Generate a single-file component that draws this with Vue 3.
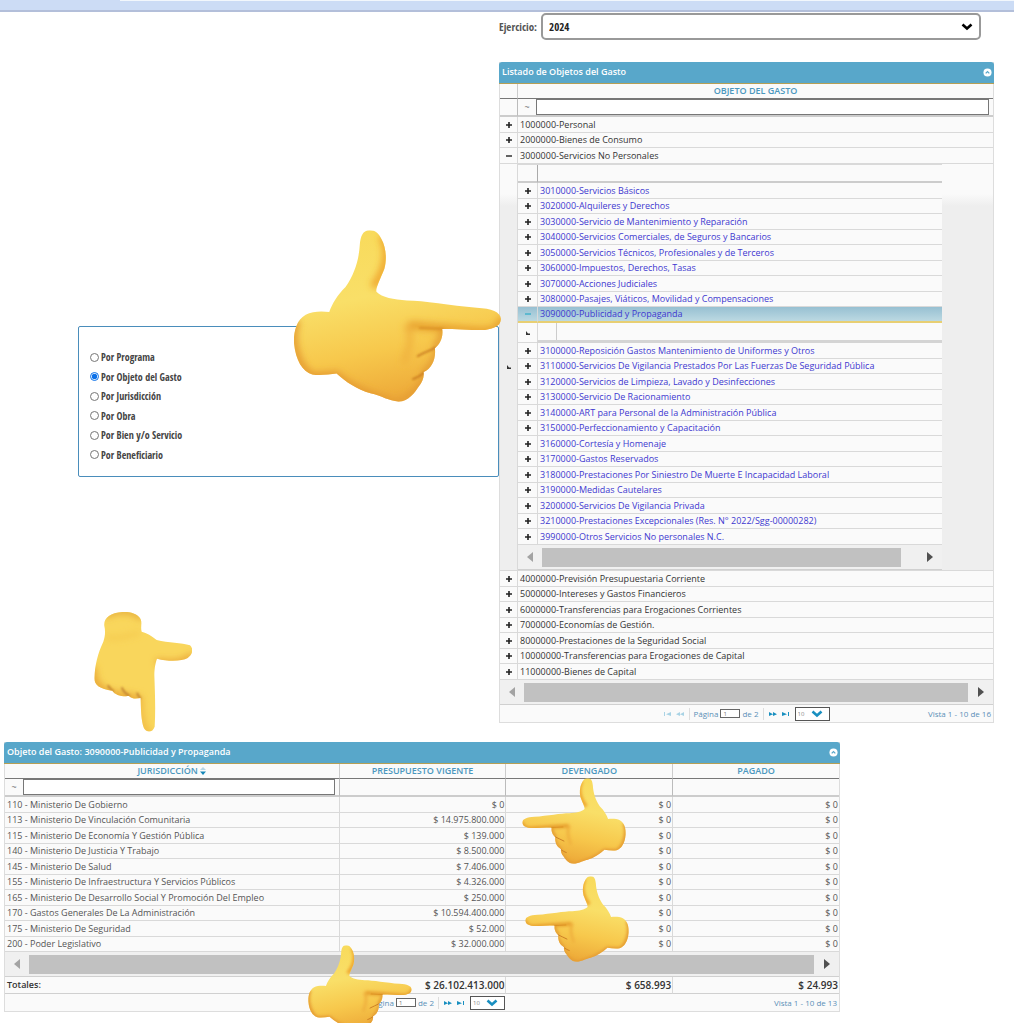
<script setup>
import { ref } from 'vue'

const year = ref('2024')
const grouping = ref('Por Objeto del Gasto')
const groupings = [
  'Por Programa',
  'Por Objeto del Gasto',
  'Por Jurisdicción',
  'Por Obra',
  'Por Bien y/o Servicio',
  'Por Beneficiario',
]

const rowsBefore = ['1000000-Personal', '2000000-Bienes de Consumo', '3000000-Servicios No Personales']
const rowsAfter = [
  '4000000-Previsión Presupuestaria Corriente',
  '5000000-Intereses y Gastos Financieros',
  '6000000-Transferencias para Erogaciones Corrientes',
  '7000000-Economías de Gestión.',
  '8000000-Prestaciones de la Seguridad Social',
  '10000000-Transferencias para Erogaciones de Capital',
  '11000000-Bienes de Capital',
]
const selected = '3090000-Publicidad y Propaganda'
const subBefore = [
  '3010000-Servicios Básicos',
  '3020000-Alquileres y Derechos',
  '3030000-Servicio de Mantenimiento y Reparación',
  '3040000-Servicios Comerciales, de Seguros y Bancarios',
  '3050000-Servicios Técnicos, Profesionales y de Terceros',
  '3060000-Impuestos, Derechos, Tasas',
  '3070000-Acciones Judiciales',
  '3080000-Pasajes, Viáticos, Movilidad y Compensaciones',
  selected,
]
const subAfter = [
  '3100000-Reposición Gastos Mantenimiento de Uniformes y Otros',
  '3110000-Servicios De Vigilancia Prestados Por Las Fuerzas De Seguridad Pública',
  '3120000-Servicios de Limpieza, Lavado y Desinfecciones',
  '3130000-Servicio De Racionamiento',
  '3140000-ART para Personal de la Administración Pública',
  '3150000-Perfeccionamiento y Capacitación',
  '3160000-Cortesía y Homenaje',
  '3170000-Gastos Reservados',
  '3180000-Prestaciones Por Siniestro De Muerte E Incapacidad Laboral',
  '3190000-Medidas Cautelares',
  '3200000-Servicios De Vigilancia Privada',
  '3210000-Prestaciones Excepcionales (Res. N° 2022/Sgg-00000282)',
  '3990000-Otros Servicios No personales N.C.',
]

const budget = [
  ['110 - Ministerio De Gobierno', '$ 0'],
  ['113 - Ministerio De Vinculación Comunitaria', '$ 14.975.800.000'],
  ['115 - Ministerio De Economía Y Gestión Pública', '$ 139.000'],
  ['140 - Ministerio De Justicia Y Trabajo', '$ 8.500.000'],
  ['145 - Ministerio De Salud', '$ 7.406.000'],
  ['155 - Ministerio De Infraestructura Y Servicios Públicos', '$ 4.326.000'],
  ['165 - Ministerio De Desarrollo Social Y Promoción Del Empleo', '$ 250.000'],
  ['170 - Gastos Generales De La Administración', '$ 10.594.400.000'],
  ['175 - Ministerio De Seguridad', '$ 52.000'],
  ['200 - Poder Legislativo', '$ 32.000.000'],
]
</script>

<template>
  <div class="page">
    <svg class="defs" aria-hidden="true">
      <defs>
        <linearGradient id="skin" x1="0" y1="0" x2="0.25" y2="1">
          <stop offset="0" stop-color="#f8d958" />
          <stop offset="0.45" stop-color="#f9df68" />
          <stop offset="0.75" stop-color="#f7c84c" />
          <stop offset="1" stop-color="#eeac3a" />
        </linearGradient>
        <filter id="soft" x="-30%" y="-30%" width="160%" height="160%"><feGaussianBlur stdDeviation="11" /></filter>
        <filter id="fine" x="-30%" y="-30%" width="160%" height="160%"><feGaussianBlur stdDeviation="3" /></filter>
        <clipPath id="outline">
          <path d="M268 29C245 29 240 50 238 72C235 120 222 160 195 200C170 225 155 250 146 275C125 272 95 272 75 283C45 300 38 340 40 370C45 420 65 455 95 463C120 467 145 462 168 460C195 485 230 508 270 520C305 528 325 543 355 545C385 545 405 515 415 500C428 485 432 470 430 456C455 445 468 415 464 384C480 372 490 350 486 326C530 326 580 330 615 329C645 325 662 315 663 296C662 275 635 264 590 262C510 255 430 240 380 240C340 237 305 232 288 214C285 205 300 175 312 145C320 115 317 80 303 55C295 38 285 29 268 29Z" />
        </clipPath>
        <clipPath id="outline-down">
          <path d="M112 36C75 38 55 55 58 78C62 95 60 110 55 125C38 160 30 195 28 235C28 255 45 268 82 272C90 285 110 290 132 288C142 298 155 296 167 294C168 330 168 360 177 385C187 400 203 397 209 380C212 330 210 280 208 225C208 205 212 185 216 176C250 185 290 184 308 174C325 162 325 145 315 136C290 127 250 130 215 120C200 108 185 98 170 95C166 80 172 70 167 58C160 42 135 34 112 36Z" />
        </clipPath>
        <symbol id="hand" viewBox="38 28 627 518">
          <g clip-path="url(#outline)">
            <rect x="30" y="20" width="645" height="535" fill="url(#skin)" />
            <g fill="none" filter="url(#soft)">
              <path d="M305 45C330 90 320 150 278 200" stroke="#efa62f" stroke-width="24" />
              <path d="M48 300C25 350 45 440 95 470L168 466C200 498 270 530 355 552" stroke="#e59b32" stroke-width="24" />
              <path d="M385 315C440 318 560 333 625 333Q665 325 668 290" stroke="#e8a12f" stroke-width="24" />
              <path d="M375 315C405 345 380 400 370 430" stroke="#efb03d" stroke-width="16" />
              <path d="M350 545C400 540 435 480 435 455C465 430 475 390 468 375Q490 350 488 326" stroke="#e39a33" stroke-width="18" />
            </g>
            <g fill="none" filter="url(#fine)" stroke-linecap="round">
              <path d="M418 323L488 326" stroke="#d88c20" stroke-width="5" />
              <path d="M412 408C430 398 448 392 466 382" stroke="#c4741f" stroke-width="5" />
              <path d="M398 477C410 473 422 466 434 456" stroke="#c4741f" stroke-width="5" />
            </g>
          </g>
        </symbol>
        <symbol id="collapse" viewBox="0 0 10 10">
          <circle cx="5" cy="5" r="4.5" fill="#fff" />
          <path d="M3 6L5 4L7 6" fill="none" stroke="#58a7ca" stroke-width="1.4" />
        </symbol>
        <symbol id="chevron" viewBox="0 0 12 8"><path d="M1.5 1.5L6 5.5L10.500 1.500" fill="none" stroke="currentColor" stroke-width="2.600" /></symbol>
        <symbol id="plus" viewBox="0 0 8 8"><path d="M1 4H7M4 1V7" stroke="#222" stroke-width="1.6" /></symbol>
        <symbol id="minus" viewBox="0 0 8 8"><path d="M1 4H7" stroke="currentColor" stroke-width="1.4" /></symbol>
        <symbol id="branch" viewBox="0 0 6 6"><path d="M1 1V5H5V3.500H3Z" fill="#333" /></symbol>
        <symbol id="left" viewBox="0 0 6 10"><path d="M6 0V10L0 5Z" fill="#a3a3a3" /></symbol>
        <symbol id="right" viewBox="0 0 6 10"><path d="M0 0V10L6 5Z" fill="#505050" /></symbol>
        <symbol id="next" viewBox="0 0 8 6"><path d="M0 1L4 3.200L0 5ZM4 1L8 3.200L4 5Z" fill="currentColor" /></symbol>
        <symbol id="last" viewBox="0 0 8 6"><path d="M0 1L5 3.200L0 5ZM6 1H7V5H6Z" fill="currentColor" /></symbol>
      </defs>
    </svg>

    <div class="topbar"><span></span></div>

    <main class="upper">
      <fieldset class="choices">
        <label v-for="g in groupings" :key="g">
          <input v-model="grouping" type="radio" name="grouping" :value="g" />{{ g }}
        </label>
      </fieldset>

      <div class="right">
        <div class="year">
          <label for="year">Ejercicio:</label>
          <div class="pick">
            <select id="year" v-model="year"><option>2024</option></select>
            <svg><use href="#chevron" /></svg>
          </div>
        </div>

        <section class="panel objects">
          <header>
            <h2>Listado de Objetos del Gasto</h2>
            <button type="button" aria-label="Contraer"><svg><use href="#collapse" /></svg></button>
          </header>
          <table>
            <colgroup><col class="tree" /><col /></colgroup>
            <thead>
              <tr class="heads"><th></th><th>OBJETO DEL GASTO</th></tr>
              <tr class="filters">
                <td></td>
                <td><div class="filter"><span>~</span><input type="text" aria-label="Filtrar objeto" /></div></td>
              </tr>
            </thead>
            <tbody class="rows">
              <tr v-for="(r, i) in rowsBefore" :key="r">
                <td class="icon"><svg><use :href="i === 2 ? '#minus' : '#plus'" /></svg></td>
                <td>{{ r }}</td>
              </tr>
              <tr class="nest">
                <td class="icon"><svg class="branch"><use href="#branch" /></svg></td>
                <td>
                  <div class="sub">
                    <table>
                      <colgroup><col class="tree" /><col /></colgroup>
                      <thead><tr class="blank"><td></td><td></td></tr></thead>
                      <tbody class="rows">
                        <tr v-for="r in subBefore" :key="r" :class="{ selected: r === selected }">
                          <td class="icon"><svg><use :href="r === selected ? '#minus' : '#plus'" /></svg></td>
                          <td>{{ r }}</td>
                        </tr>
                        <tr class="empty">
                          <td class="icon"><svg class="branch"><use href="#branch" /></svg></td>
                          <td><span></span></td>
                        </tr>
                        <tr v-for="r in subAfter" :key="r">
                          <td class="icon"><svg><use href="#plus" /></svg></td>
                          <td>{{ r }}</td>
                        </tr>
                      </tbody>
                    </table>
                    <div class="scroll short"><svg><use href="#left" /></svg><i></i><svg><use href="#right" /></svg></div>
                  </div>
                </td>
              </tr>
              <tr v-for="r in rowsAfter" :key="r">
                <td class="icon"><svg><use href="#plus" /></svg></td>
                <td>{{ r }}</td>
              </tr>
            </tbody>
          </table>
          <div class="scroll"><svg><use href="#left" /></svg><i></i><svg><use href="#right" /></svg></div>
          <footer>
            <div class="pager">
              <button type="button" disabled aria-label="Primera"><svg class="flip"><use href="#last" /></svg></button>
              <button type="button" disabled aria-label="Anterior"><svg class="flip"><use href="#next" /></svg></button>
              <label>Página <input type="text" value="1" /></label><span class="of">de 2</span>
              <button type="button" aria-label="Siguiente"><svg><use href="#next" /></svg></button>
              <button type="button" aria-label="Última"><svg><use href="#last" /></svg></button>
              <div class="size"><select aria-label="Filas por página"><option>10</option></select><svg><use href="#chevron" /></svg></div>
            </div>
            <p>Vista 1 - 10 de 16</p>
          </footer>
        </section>
      </div>
    </main>

    <section class="panel budget">
      <header>
        <h2>Objeto del Gasto: 3090000-Publicidad y Propaganda</h2>
        <button type="button" aria-label="Contraer"><svg><use href="#collapse" /></svg></button>
      </header>
      <table>
        <colgroup><col class="name" /><col /><col /><col /></colgroup>
        <thead>
          <tr class="heads">
            <th>JURISDICCIÓN <svg class="sort" viewBox="0 0 6 8"><path d="M0 3L3 0L6 3Z" fill="#b5d6e6" /><path d="M0 4.500H6L3 8Z" fill="#1687b8" /></svg></th>
            <th>PRESUPUESTO VIGENTE</th><th>DEVENGADO</th><th>PAGADO</th>
          </tr>
          <tr class="filters">
            <td><div class="filter"><span>~</span><input type="text" aria-label="Filtrar jurisdicción" /></div></td>
            <td></td><td></td><td></td>
          </tr>
        </thead>
        <tbody class="rows">
          <tr v-for="[name, amount] in budget" :key="name">
            <td>{{ name }}</td><td>{{ amount }}</td><td>$ 0</td><td>$ 0</td>
          </tr>
        </tbody>
        <tbody>
          <tr>
            <td colspan="4"><div class="scroll"><svg><use href="#left" /></svg><i></i><svg><use href="#right" /></svg></div></td>
          </tr>
        </tbody>
        <tfoot>
          <tr><td>Totales:</td><td>$ 26.102.413.000</td><td>$ 658.993</td><td>$ 24.993</td></tr>
        </tfoot>
      </table>
      <footer>
        <div class="pager">
          <button type="button" disabled aria-label="Primera"><svg class="flip"><use href="#last" /></svg></button>
          <button type="button" disabled aria-label="Anterior"><svg class="flip"><use href="#next" /></svg></button>
          <label>Página <input type="text" value="1" /></label><span class="of">de 2</span>
          <button type="button" aria-label="Siguiente"><svg><use href="#next" /></svg></button>
          <button type="button" aria-label="Última"><svg><use href="#last" /></svg></button>
          <div class="size"><select aria-label="Filas por página"><option>10</option></select><svg><use href="#chevron" /></svg></div>
        </div>
        <p>Vista 1 - 10 de 13</p>
      </footer>
      <svg class="hand devengado"><use href="#hand" /></svg>
      <svg class="hand legislativo"><use href="#hand" /></svg>
      <svg class="hand total"><use href="#hand" /></svg>
    </section>

    <svg class="hand big"><use href="#hand" /></svg>
    <svg class="hand down" viewBox="27 36 294 360">
      <g clip-path="url(#outline-down)">
        <rect x="20" y="30" width="310" height="370" fill="#f9d65c" />
        <g fill="none" filter="url(#soft)">
          <path d="M60 48C90 25 150 28 172 55" stroke="#e5ae3c" stroke-width="20" />
          <path d="M22 200C15 260 60 280 90 285L165 300" stroke="#e9a838" stroke-width="26" />
          <path d="M214 184C250 194 300 192 322 165" stroke="#e8a235" stroke-width="18" />
          <path d="M165 290C165 330 170 400 200 402" stroke="#efb23e" stroke-width="14" />
          <path d="M62 110C80 122 125 110 165 98" stroke="#f2c246" stroke-width="8" />
        </g>
        <g fill="none" filter="url(#fine)" stroke="#b9782a" stroke-width="5">
          <path d="M68 256Q76 268 86 275" />
          <path d="M110 262Q118 280 134 288" />
          <path d="M156 278Q160 290 168 296" />
        </g>
      </g>
    </svg>
  </div>
</template>

<style>
body { margin: 0; background: #fff; }
</style>

<style scoped>
* { box-sizing: border-box; }
.page {
  position: relative;
  min-height: 100vh;
  overflow: hidden;
  font-family: "Open Sans", "Noto Sans", sans-serif;
  font-size: 9px;
  line-height: 12px;
  color: #333;
}
.defs { position: absolute; width: 0; height: 0; }
svg { display: block; }
button { padding: 0; border: 0; background: none; cursor: pointer; }
.topbar { height: 12px; background: #ccdcf5; border-bottom: 2px solid #b3bfda; }
.topbar span { display: block; height: 1px; margin-left: 120px; background: #f2f7fc; }

.upper {
  display: grid;
  grid-template-columns: minmax(0, 421fr) minmax(0, 495fr);
  align-items: start;
  padding: 1px 20px 0 78px;
}
.choices {
  min-width: 0;
  height: 151px;
  margin: 313px 0 0;
  padding: 20px 11px 0;
  border: 1px solid #4a8dbb;
  border-radius: 2px;
}
.choices label {
  display: flex;
  align-items: center;
  gap: 2px;
  height: 20px;
  font: 700 10px/16px "Open Sans Condensed", "Roboto Condensed", "Noto Sans Condensed", Roboto, sans-serif;
  color: #444;
}
.choices label:nth-child(even) { height: 19px; }
.choices input { width: 9px; height: 9px; margin: 0; accent-color: #0b70e8; }

.year {
  display: flex;
  align-items: center;
  gap: 4px;
  height: 27px;
  margin-bottom: 22px;
  font: 700 11px/16px "Open Sans Condensed", "Roboto Condensed", "Noto Sans Condensed", Roboto, sans-serif;
}
.year label { color: #555; }
.pick { position: relative; flex: 1; margin-right: 13px; }
.pick select {
  display: block;
  width: 100%;
  height: 27px;
  padding: 0 6px;
  appearance: none;
  border: 2px solid #999;
  border-radius: 5px;
  background: #fff;
  font: inherit;
  color: #222;
}
.pick svg { position: absolute; right: 8px; top: 10px; width: 12px; height: 8px; color: #000; pointer-events: none; }

.panel { position: relative; border: 1px solid #ddd; border-top: 0; background: #fafafa; }
.panel header {
  display: flex;
  align-items: center;
  justify-content: space-between;
  height: 22px;
  margin: 0 -1px;
  padding: 0 2px 1px 3px;
  border-bottom: 1px solid #b59f55;
  border-radius: 3px 3px 0 0;
  background: #58a7ca;
}
.panel h2 { margin: 0; font-size: 9px; line-height: 12px; font-weight: 600; color: #fff; }
.panel header svg { width: 9px; height: 9px; }

table { width: 100%; table-layout: fixed; border-collapse: separate; border-spacing: 0; }
td, th { padding: 0; }
.tree { width: 17px; }
.heads th { height: 15px; border-bottom: 1px solid #777; border-left: 1px solid #ccc; font-weight: 600; color: #4a97be; }
.heads th:first-child, .filters td:first-child { border-left: 0; }
.filters td { height: 18px; border-bottom: 2px solid #ccc; border-left: 1px solid #bbb; }
.filter { display: flex; align-items: center; padding-right: 4px; }
.filter span { width: 18px; text-align: center; color: #777; }
.filter input { flex: 1; min-width: 0; height: 16px; padding: 0 4px; border: 1px solid #777; background: #fff; font: inherit; }
.rows > tr > td { height: 16px; border-bottom: 1px solid #d9d9d9; white-space: nowrap; }
.rows > tr:nth-child(even) > td { height: 15px; }
.rows > tr > td + td { padding-left: 2px; border-left: 1px solid #d9d9d9; }
.icon svg { width: 8px; height: 8px; margin: 0 auto; color: #222; }
.icon svg.branch { width: 6px; height: 6px; }
.rows > .nest > td { background: linear-gradient(#fafafa 30px, #eee 42px); }
.rows > .nest > td:last-child { padding: 0; }
.sub { width: calc(100% - 51px); background: #fafafa; border-top: 1px solid #d9d9d9; color: #4038d0; }
.sub .tree { width: 19px; }
.blank td { height: 18px; border-bottom: 2px solid #ccc; }
.blank td + td { border-left: 1px solid #aaa; }
.rows > .selected > td { background: linear-gradient(#97c0d2, #bcd9e2); border-bottom: 2px solid #e8cf73; }
.selected svg { color: #3eb1cb; }
.rows > tr.empty:nth-child(even) > td { height: 20px; }
.rows > .empty > td + td { padding: 0; border-bottom: 3px solid #d4d4d4; }
.empty span { display: block; width: 19px; height: 17px; border-right: 1px solid #ccc; }

.scroll { display: grid; grid-template-columns: 24px 1fr 25px; align-items: center; justify-items: center; height: 25px; background: #f0f0f0; border-bottom: 1px solid #d0d0d0; }
.scroll i { width: 100%; height: 19px; background: #c1c1c1; }
.scroll svg { width: 6px; height: 10px; }
.scroll.short { grid-template-columns: 24px 1fr 41px; }
.scroll.short svg:last-child { margin-left: 16px; }

.panel footer { display: grid; grid-template-columns: 1fr auto 1fr; align-items: center; height: 17px; font-size: 8px; color: #5b90b8; }
.pager { grid-column: 2; display: flex; align-items: center; gap: 5px; }
.pager label { display: flex; align-items: center; gap: 2px; padding-left: 3px; border-left: 1px solid #ddd; }
.pager input { width: 20px; height: 9px; padding: 0 2px; border: 1px solid #666; font: inherit; font-size: 6px; line-height: 7px; color: #777; }
.of { margin-left: -3px; padding-right: 4px; border-right: 1px solid #ddd; }
.pager svg { width: 8px; height: 6px; color: #198fc0; }
.pager button:disabled svg { color: #a9d3e5; }
.flip { transform: scaleX(-1); }
.size { position: relative; }
.size select { display: block; width: 35px; height: 14px; padding: 0 2px; appearance: none; border: 1px solid #555; border-radius: 0; background: #fff; font: inherit; font-size: 6px; line-height: 10px; color: #888; }
.pager .size svg { position: absolute; right: 7px; top: 3px; width: 12px; height: 8px; pointer-events: none; }
.panel footer p { margin: 0; padding-right: 2px; text-align: right; }

.budget { width: calc(100% - 178px); margin: 19px 0 0 4px; color: #555; }
.budget .name { width: 40%; }
.budget .rows > tr > td:first-child, .budget tfoot td:first-child { padding-left: 2px; }
.budget .rows > tr > td + td, .budget tfoot td + td { padding-right: 1px; text-align: right; }
.budget tfoot td { height: 17px; border-bottom: 1px solid #d0d0d0; font-weight: 600; color: #333; }
.budget tfoot td + td { border-left: 1px solid #d9d9d9; font-size: 10px; }
.sort { display: inline-block; width: 6px; height: 8px; vertical-align: -1px; }

.hand { position: absolute; pointer-events: none; }
.big { left: 293px; top: 230px; width: 209px; height: 172px; }
.down { left: 94px; top: 612px; width: 98px; height: 120px; }
.devengado, .legislativo, .total { width: 104px; height: 86px; }
.devengado { left: 517px; top: 36px; transform: scaleX(-1); }
.legislativo { left: 520px; top: 134px; transform: scaleX(-1); }
.total { left: 303px; top: 203px; }
</style>
